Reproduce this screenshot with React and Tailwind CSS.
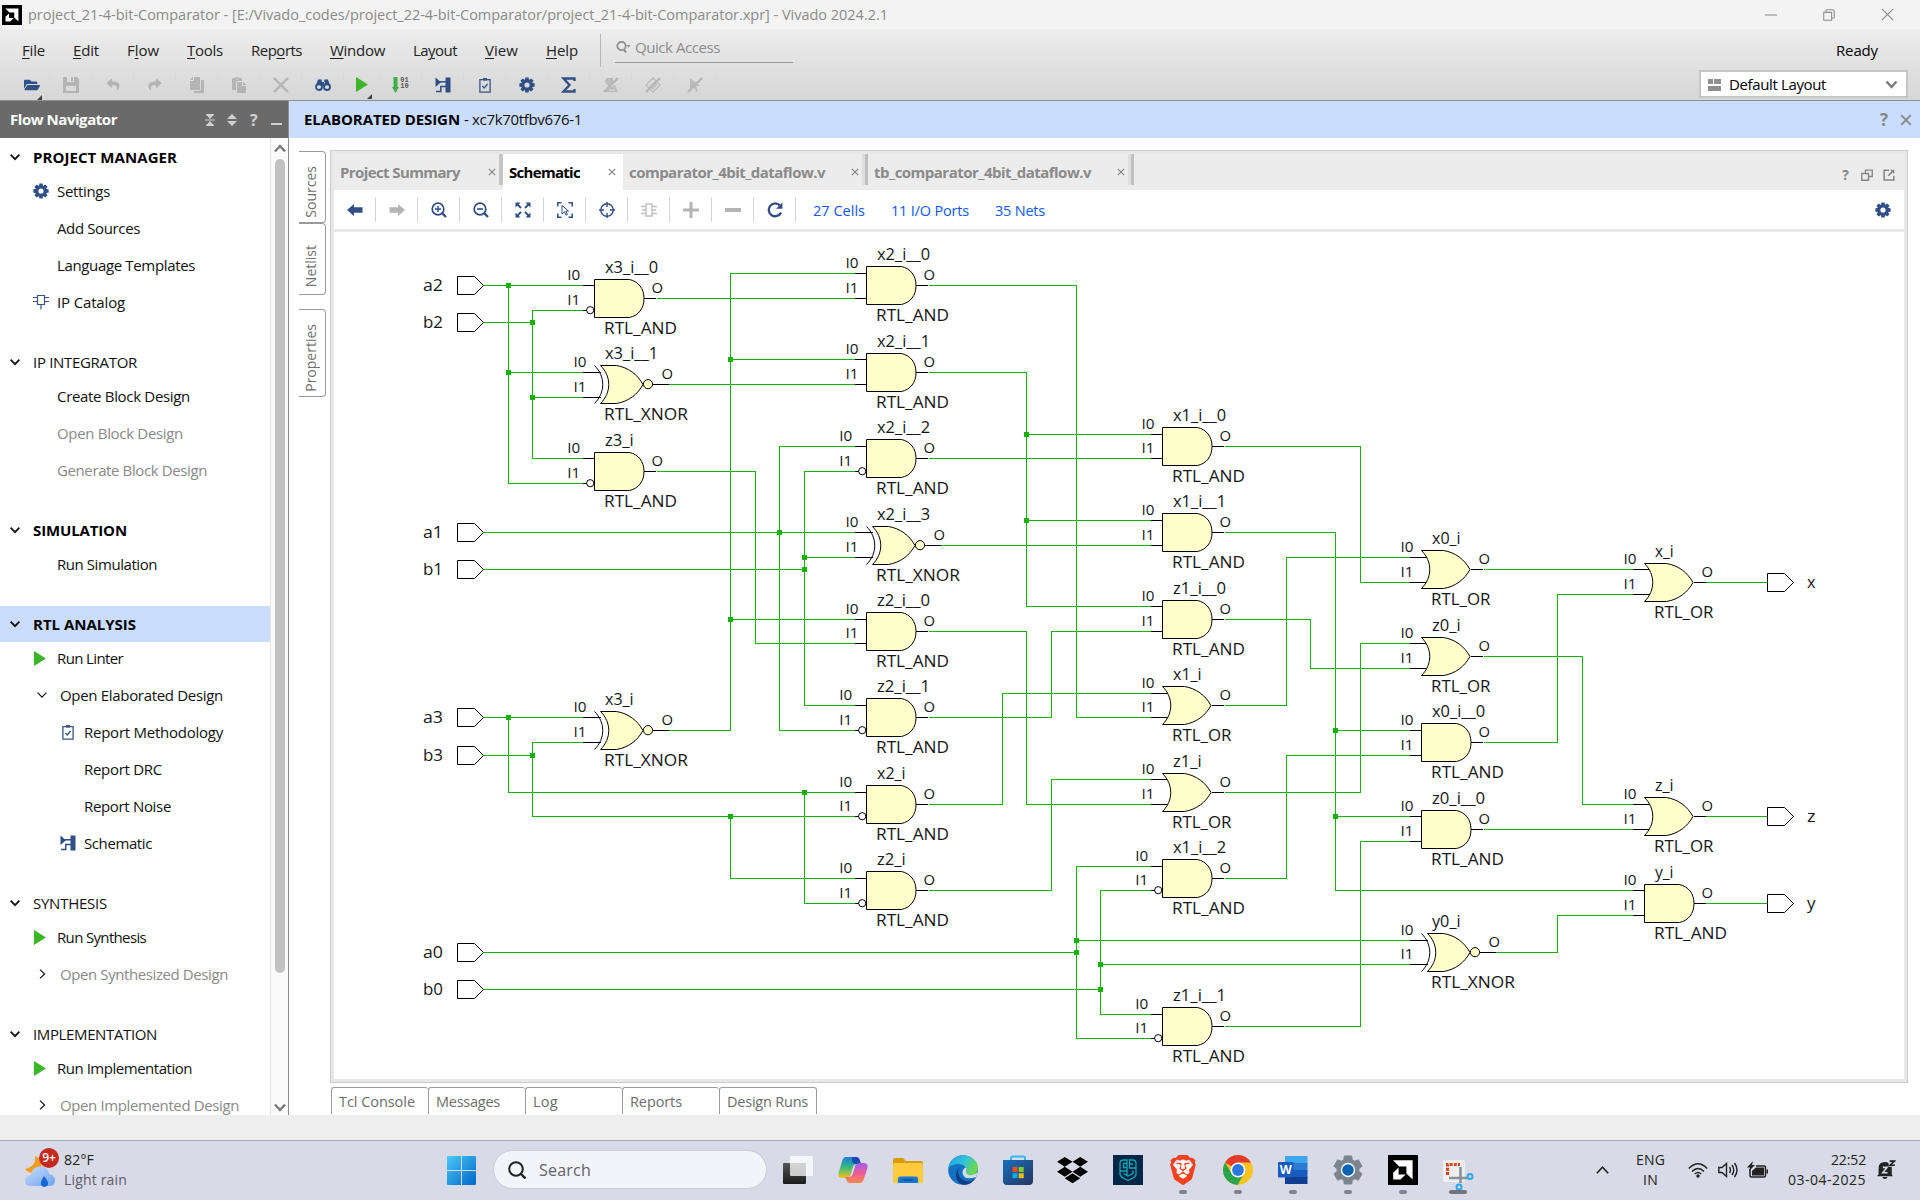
import { useLayoutEffect, useRef, useState } from "react";
import { FaDropbox, FaFolderOpen, FaReply, FaShare, FaCopy, FaPaste } from "react-icons/fa";
import { SiBrave } from "react-icons/si";

/* Text run whose tracking is adjusted so that it spans w pixels. */
function Fit({ w, className = "", children }) {
  const ref = useRef(null);
  const [spacing, setSpacing] = useState(0);
  useLayoutEffect(() => {
    const el = ref.current;
    setSpacing((w - el.getBoundingClientRect().width) / el.textContent.length);
  }, [w]);
  return (
    <span ref={ref} className={"inline-block whitespace-pre " + className} style={{ letterSpacing: spacing }}>
      {children}
    </span>
  );
}

/* ---------- icons ---------- */

function gearPath(c, ro, ri, teeth, half) {
  const pts = [];
  for (let i = 0; i < teeth; i++) {
    const a = (i * 2 * Math.PI) / teeth - Math.PI / 2;
    [[-half * 1.5, ri], [-half, ro], [half, ro], [half * 1.5, ri]].forEach(([d, r]) => {
      pts.push(`${(c + r * Math.cos(a + d)).toFixed(2)} ${(c + r * Math.sin(a + d)).toFixed(2)}`);
    });
  }
  return "M" + pts.join("L") + "Z";
}

const Gear = ({ className = "size-4" }) => (
  <svg viewBox="0 0 16 16" className={"fill-[#2f4f86] " + className}>
    <path fillRule="evenodd" d={gearPath(8, 7.8, 5.8, 8, 0.22) + "M8 5.4a2.6 2.6 0 1 0 0 5.2a2.6 2.6 0 1 0 0 -5.2Z"} />
  </svg>
);

const Play = ({ className = "h-[15px] w-3" }) => (
  <svg viewBox="0 0 12 15" className={"fill-[#3db52a] " + className}>
    <path d="M0 0L12 7.5L0 15Z" />
  </svg>
);

const Clipboard = ({ className = "h-[16px] w-3" }) => (
  <svg viewBox="0 0 12 16" fill="none" stroke="#3b5488" strokeWidth="1.3" className={className}>
    <path d="M.9 2.6H11.1V15.2H.9Z" />
    <path d="M4 1H8V3.6H4Z" fill="#3b5488" stroke="none" />
    <path d="M3.4 9L5.2 11L8.6 7" />
  </svg>
);

const SchematicIcon = ({ className = "size-4" }) => (
  <svg viewBox="0 0 16 16" className={className}>
    <path d="M.5 .5V10L6 5.2Z M10.5 .5H15.5V15.5H10.5Z" fill="#2f4f86" />
    <path d="M4 4.8H11M1 14.6H5.8V9.5H11M12 0" stroke="#2f4f86" strokeWidth="1.5" fill="none" />
  </svg>
);

const ChipIcon = () => (
  <svg viewBox="0 0 16 16" fill="none" stroke="#3b5488" strokeWidth="1.2" className="size-4">
    <path d="M4.5 1.5H11.5V10.5H4.5ZM0 3.5H4.5M0 7.5H4.5M11.5 3.5H16M11.5 7.5H16M8 10.5V15.5" />
  </svg>
);

const Chevron = ({ dir = "down", thin = false }) => (
  <svg viewBox="0 0 10 10" fill="none" stroke="#111" strokeWidth={thin ? 1.2 : 1.8} className="-mt-px size-[10px] shrink-0">
    <path d={dir === "down" ? "M.6 2.6L5 7.2L9.4 2.6" : "M3 .6L7.6 5L3 9.4"} />
  </svg>
);

const BigChevron = ({ up = false, className = "w-3 h-[9px]" }) => (
  <svg viewBox="0 0 12 9" fill="none" stroke="#7b7b7b" strokeWidth="2.4" className={className}>
    <path d={up ? "M1 7.5L6 2L11 7.5" : "M1 1.5L6 7L11 1.5"} />
  </svg>
);

const CloseX = ({ className = "size-[9px]" }) => (
  <svg viewBox="0 0 10 10" fill="none" stroke="#858585" strokeWidth="1.5" className={className}>
    <path d="M1 1L9 9M9 1L1 9" />
  </svg>
);

const Amd = ({ className }) => (
  <svg viewBox="0 0 30 30" className={className}>
    <path d="M0 0H30V30H0Z" fill="#000" />
    <path d="M5 5.2H24.6V24.6L18.4 18.6V11.4H11.2Z" fill="#fff" />
    <path d="M10.6 12.6V19.4H17.6L12.4 24.6H5.2V17.8Z" fill="#fff" />
  </svg>
);

const Svg = ({ children, className = "size-4", box = "0 0 16 16" }) => (
  <svg viewBox={box} fill="none" className={className}>
    {children}
  </svg>
);

/* ---------- title and menus ---------- */

function TitleBar() {
  return (
    <div className="flex h-[29px] items-center bg-[#f3f3f3] pl-[2px] pr-[26px] text-[14.5px] text-[#8b8b8b]">
      <Amd className="mr-[6px] size-5" />
      <Fit w={860}>project_21-4-bit-Comparator - [E:/Vivado_codes/project_22-4-bit-Comparator/project_21-4-bit-Comparator.xpr] - Vivado 2024.2.1</Fit>
      <div className="ml-auto flex items-center gap-[46px]">
        <Svg className="size-3"><path d="M0 8H16" stroke="#8b8b8b" strokeWidth="1.4" /></Svg>
        <Svg className="size-3">
          <path d="M1 4.5H11.5V15H1Z M4 4.5V2.5Q4 1 5.5 1H13Q15 1 15 3V11Q15 12 13.5 12.2H12" stroke="#8b8b8b" strokeWidth="1.4" />
        </Svg>
        <Svg className="size-[13px]"><path d="M1 1L15 15M15 1L1 15" stroke="#8b8b8b" strokeWidth="1.4" /></Svg>
      </div>
    </div>
  );
}

const menus = [
  ["", "F", "ile", 23], ["", "E", "dit", 26], ["F", "l", "ow", 32], ["", "T", "ools", 36], ["Rep", "o", "rts", 51],
  ["", "W", "indow", 55], ["La", "y", "out", 44], ["", "V", "iew", 33], ["", "H", "elp", 32],
];

const Corner = ({ className }) => (
  <span className={"absolute -bottom-[7px] h-0 w-0 border-b-[5px] border-l-[5px] border-b-[#444] border-l-transparent " + className} />
);

const toolIcons = [
  <div className="relative ml-[6px]"><FaFolderOpen className="size-4 text-[#2f4f86]" /><Corner className="left-[13px]" /></div>,
  <Svg><path fillRule="evenodd" d="M0 0H4V5H11V0H14L16 2V16H0ZM3 9V14H13V9Z M8 0H10V4H8Z" fill="#b4b4b4" /></Svg>,
  <FaReply className="h-[13px] w-4 text-[#b4b4b4]" />,
  <FaShare className="h-[13px] w-4 text-[#b4b4b4]" />,
  <FaCopy className="size-4 -scale-x-100 text-[#b4b4b4]" />,
  <FaPaste className="size-4 text-[#b4b4b4]" />,
  <Svg><path d="M1 1L15 15M15 1L1 15" stroke="#b4b4b4" strokeWidth="2.4" /></Svg>,
  <Svg><circle cx="4" cy="10" r="3" stroke="#2f4f86" strokeWidth="1.8" /><circle cx="12" cy="10" r="3" stroke="#2f4f86" strokeWidth="1.8" /><path d="M3 2.500H6.800V8L1 8.500ZM13 2.500H9.200V8L15 8.500ZM6 5H10V9H6Z" fill="#2f4f86" /></Svg>,
  <div className="relative"><Play /><Corner className="left-[11px]" /></div>,
  <div className="flex"><Svg box="0 0 7 16" className="h-4 w-[7px]"><path d="M1.5 0H5.5V10H7L3.5 16L0 10H1.5Z" fill="#3cb04a" /></Svg><div className="ml-px font-mono text-[7px] font-bold leading-[6px] text-[#555]">01<br />10</div></div>,
  <SchematicIcon />,
  <Clipboard />,
  <Gear />,
  <Svg><path d="M13.5 4V1.5H2.5L8.5 8L2.5 14.5H13.5V12" stroke="#2f4f86" strokeWidth="2.3" /></Svg>,
  <Svg><path d="M3 1H10V6L6 10L2 5Z M3 12L8 10L12 8L15 15H0Z" fill="#bcbcbc" /><path d="M6 13H12" stroke="#ddd" /><path d="M15 1L1 15" stroke="#b4b4b4" strokeWidth="2.2" /></Svg>,
  <Svg><path d="M8 1L15 8L8 15L1 8Z M10 5L5 10M12 7L7 12" stroke="#bcbcbc" strokeWidth="1.3" /><path d="M15 1L1 15" stroke="#b4b4b4" strokeWidth="2" /></Svg>,
  <Svg><path d="M3 1L13 9H9L11 14L9 15L7 10L3 13Z" fill="#bcbcbc" /><path d="M15 1L1 15" stroke="#b4b4b4" strokeWidth="2.2" /></Svg>,
];

function MenuArea() {
  return (
    <div className="flex h-[72px] justify-between border-b border-[#8f8f8f] bg-gradient-to-b from-[#ededed] to-[#d6d6d6] pr-[12px]">
      <div>
        <div className="flex h-[39px] items-center pl-[22px] text-[15px] text-[#222]">
          <div className="flex gap-[28px] pt-[4px]">
            {menus.map(([a, u, b, w]) => (
              <Fit key={u + b} w={w}>{a}<span className="underline decoration-1 underline-offset-2">{u}</span>{b}</Fit>
            ))}
          </div>
          <div className="ml-[22px] mt-[3px] h-[33px] w-px bg-[#b5b5b5]" />
          <div className="ml-[14px] mt-px flex h-[28px] w-[178px] items-center border-b border-[#999] pb-[3px] text-[#8b8b8b]">
            <Svg className="mr-[2px] h-4 w-[18px]" box="0 0 18 16"><circle cx="6.5" cy="7" r="4.2" stroke="#8b8b8b" strokeWidth="1.7" /><path d="M8.5 10L11 13.5" stroke="#8b8b8b" strokeWidth="2" /><path d="M11.500 6H15.500L13.500 8.500Z" fill="#8b8b8b" /></Svg>
            <Fit w={85}>Quick Access</Fit>
          </div>
        </div>
        <div className="flex h-[33px] items-center pl-[8px]">
          {toolIcons.map((icon, i) => (
            <div key={i} className={"flex h-[26px] items-center justify-center border-r border-[#dadada] " + (i === 8 ? "w-[36px]" : "w-[42px]")}>{icon}</div>
          ))}
        </div>
      </div>
      <div className="flex flex-col items-end text-[15px]">
        <div className="mr-[30px] flex h-[42px] items-center"><Fit w={42}>Ready</Fit></div>
        <div className="-mt-px flex h-[28px] w-[209px] items-center border-2 border-[#c6c6c6] bg-white pl-[7px] pr-[8px]">
          <Svg className="size-[13px]" box="0 0 13 13"><path d="M0 1H5V6H0ZM6 1H13V6H6ZM0 8H13V13H0Z" fill="#8f8f8f" /></Svg>
          <Fit w={97} className="ml-[8px]">Default Layout</Fit>
          <BigChevron className="ml-auto h-[9px] w-[13px]" />
        </div>
      </div>
    </div>
  );
}

/* ---------- flow navigator ---------- */

const sections = [
  { title: "PROJECT MANAGER", w: 144, bold: true, items: [
    { t: "Settings", w: 53, icon: <Gear /> }, { t: "Add Sources", w: 83 }, { t: "Language Templates", w: 138 }, { t: "IP Catalog", w: 68, icon: <ChipIcon /> }] },
  { title: "IP INTEGRATOR", w: 104, items: [
    { t: "Create Block Design", w: 133 }, { t: "Open Block Design", w: 126, off: true }, { t: "Generate Block Design", w: 150, off: true }] },
  { title: "SIMULATION", w: 94, bold: true, items: [{ t: "Run Simulation", w: 100 }] },
  { title: "RTL ANALYSIS", w: 103, bold: true, active: true, items: [
    { t: "Run Linter", w: 66, icon: <Play /> }, { t: "Open Elaborated Design", w: 163, tree: "down" },
    { t: "Report Methodology", w: 139, deep: true, icon: <Clipboard /> }, { t: "Report DRC", w: 78, deep: true },
    { t: "Report Noise", w: 87, deep: true }, { t: "Schematic", w: 68, deep: true, icon: <SchematicIcon /> }] },
  { title: "SYNTHESIS", w: 74, items: [{ t: "Run Synthesis", w: 89, icon: <Play /> }, { t: "Open Synthesized Design", w: 168, off: true, tree: "right" }] },
  { title: "IMPLEMENTATION", w: 124, items: [{ t: "Run Implementation", w: 135, icon: <Play /> }, { t: "Open Implemented Design", w: 179, off: true, tree: "right" }] },
];

function FlowNavigator() {
  return (
    <aside className="flex w-[289px] shrink-0 flex-col border-r border-[#8e8e8e] bg-white text-[15px] text-[#111]">
      <div className="flex h-[37px] items-center bg-[#6a6a6a] pl-[10px] pr-[6px] text-white">
        <Fit w={107} className="font-bold">Flow Navigator</Fit>
        <div className="ml-auto flex items-center gap-[12px] text-[#d0d0d0]">
          <Svg box="0 0 10 12" className="h-3 w-[10px]"><path d="M0 6H10M1 .6H9M1 11.4H9" stroke="#d0d0d0" strokeWidth="1.1" /><path d="M1.500 1H8.500L5 5ZM1.500 11H8.500L5 7Z" fill="#d0d0d0" /></Svg>
          <Svg box="0 0 10 12" className="h-3 w-[10px]"><path d="M5 0L10 5H0ZM5 12L10 7H0Z" fill="#d0d0d0" /></Svg>
          <span className="ml-px w-[9px] text-[16px] font-bold">?</span>
          <div className="mt-[9px] h-[2px] w-[11px] bg-[#d0d0d0]" />
        </div>
      </div>
      <div className="flex min-h-0 flex-1">
        <nav className="flex-1 overflow-hidden pt-px">
          {sections.map((s) => (
            <section key={s.title} className="mb-[23px]">
              <div className={"flex h-9 items-center gap-[13px] pl-[10px] " + (s.active ? "bg-[#cbddfe]" : "")}>
                <Chevron />
                <Fit w={s.w} className={s.bold ? "font-bold text-black" : ""}>{s.title}</Fit>
              </div>
              <div className="-mt-[2px]">
                {s.items.map((it) => (
                  <div key={it.t} className={"flex h-[37px] items-center " + (it.off ? "text-[#8a8a8a] " : "") + (it.deep ? "pl-[60px]" : "pl-[33px]")}>
                    {it.tree ? (
                      <span className="flex w-[27px] justify-start pl-[4px]"><Chevron dir={it.tree} thin /></span>
                    ) : (
                      <span className="mr-[4px] flex w-5 shrink-0 items-center"><span className={"-mt-px " + (it.t === "Report Methodology" ? "pl-[2px]" : it.icon && it.icon.type === Play ? "pl-[1px]" : "")}>{it.icon}</span></span>
                    )}
                    <Fit w={it.w}>{it.t}</Fit>
                  </div>
                ))}
              </div>
            </section>
          ))}
        </nav>
        <div className="flex w-[18px] flex-col items-center border-l border-[#e4e4e4] bg-[#fafafa] pt-[6px] pb-[3px]">
          <BigChevron up />
          <div className="mt-[6px] h-[814px] w-[10px] rounded-full bg-[#c1c1c1]" />
          <div className="flex-1" />
          <BigChevron />
        </div>
      </div>
    </aside>
  );
}

/* ---------- schematic ---------- */

const rowY = (k) => Math.round(285.4 + 12.345 * k) + 0.5;

const gates = [
  [594, 1, "AND", "x3_i__0", 1], [594, 8, "XNOR", "x3_i__1"], [594, 15, "AND", "z3_i", 1], [594, 36, "XNOR", "x3_i"],
  [866, 0, "AND", "x2_i__0"], [866, 7, "AND", "x2_i__1"], [866, 14, "AND", "x2_i__2", 1], [866, 21, "XNOR", "x2_i__3"],
  [866, 28, "AND", "z2_i__0"], [866, 35, "AND", "z2_i__1", 1], [866, 42, "AND", "x2_i", 1], [866, 49, "AND", "z2_i", 1],
  [1162, 13, "AND", "x1_i__0"], [1162, 20, "AND", "x1_i__1"], [1162, 27, "AND", "z1_i__0"], [1162, 34, "OR", "x1_i"],
  [1162, 41, "OR", "z1_i"], [1162, 48, "AND", "x1_i__2", 1], [1162, 60, "AND", "z1_i__1", 1],
  [1421, 23, "OR", "x0_i"], [1421, 30, "OR", "z0_i"], [1421, 37, "AND", "x0_i__0"], [1421, 44, "AND", "z0_i__0"], [1421, 54, "XNOR", "y0_i"],
  [1644, 24, "OR", "x_i"], [1644, 43, "OR", "z_i"], [1644, 50, "AND", "y_i"],
];

const inPorts = [["a2", 0], ["b2", 3], ["a1", 20], ["b1", 23], ["a3", 35], ["b3", 38], ["a0", 54], ["b0", 57]];
const outPorts = [["x", 24], ["z", 43], ["y", 50]];

/* Each wire: start x, start row, then alternating x and row targets. */
const wires = [
  [483, 0, 583], [508, 0, 508, 16, 583], [508, 7, 583],
  [483, 3, 532, 2, 583], [532, 3, 532, 14, 583], [532, 9, 583],
  [656, 1, 854], [668, 8, 854], [656, 15, 755, 29, 854], [668, 36, 730, -1, 854], [730, 6, 854], [730, 27, 854],
  [483, 20, 854], [779, 20, 779, 13, 854], [779, 20, 779, 36, 854],
  [483, 23, 804, 15, 854], [804, 22, 854], [804, 23, 804, 34, 854],
  [483, 35, 583], [508, 35, 508, 41, 854], [804, 41, 804, 50, 854],
  [483, 38, 532, 37, 583], [532, 38, 532, 43, 854], [730, 43, 730, 48, 854],
  [928, 0, 1076, 35, 1151], [928, 7, 1026, 26, 1151], [1026, 12, 1151], [1026, 19, 1151], [928, 14, 1151], [940, 21, 1151],
  [928, 28, 1026, 42, 1151], [928, 35, 1051, 28, 1151], [928, 42, 1002, 33, 1151], [928, 49, 1051, 40, 1151],
  [483, 54, 1076, 47, 1151], [1076, 54, 1076, 61, 1151], [1076, 53, 1410],
  [483, 57, 1100, 49, 1151], [1100, 57, 1100, 59, 1151], [1100, 55, 1410],
  [1224, 13, 1360, 24, 1410], [1224, 20, 1335, 49, 1632], [1335, 36, 1410], [1335, 43, 1410],
  [1224, 27, 1310, 31, 1410], [1224, 34, 1286, 22, 1410], [1224, 41, 1360, 29, 1410], [1224, 48, 1286, 38, 1410], [1224, 60, 1360, 45, 1410],
  [1483, 23, 1632], [1483, 30, 1582, 42, 1632], [1483, 37, 1557, 25, 1632], [1483, 44, 1632], [1495, 54, 1557, 51, 1632],
  [1705, 24, 1767], [1705, 43, 1767], [1705, 50, 1767],
];

const nodes = [
  [508, 0], [508, 7], [532, 3], [532, 9], [730, 6], [730, 27], [779, 20], [804, 22], [804, 23], [508, 35], [532, 38], [804, 41], [730, 43],
  [1026, 12], [1026, 19], [1076, 53], [1076, 54], [1100, 55], [1100, 57], [1335, 36], [1335, 43],
];

const wirePath = ([x, k, ...rest]) =>
  `M${x + 0.5} ${rowY(k)}` + rest.map((v, i) => (i % 2 ? `V${rowY(v)}` : `H${v + 0.5}`)).join("");

const labelWidths = { AND: 72, OR: 58.5, XNOR: 83 };
const nameWidths = { 3: 18.5, 4: 28.6, 7: 53 };

function Label({ x, y, w, size, children }) {
  return (
    <text x={x} y={y} textLength={w} lengthAdjust="spacingAndGlyphs" fontSize={size} fill="#161616">
      {children}
    </text>
  );
}

function Gate({ x, k, kind, name, bubble }) {
  const y = rowY(k);
  const ya = rowY(k - 1);
  const yb = rowY(k + 1);
  const xl = x + 0.5;
  const pinX = x - (bubble ? 26.7 : 20.5);
  const inner = kind === "AND" ? xl : xl + 6;
  const body = kind === "XNOR" ? xl + 6 : xl;
  return (
    <g>
      <g stroke="#000" fill="none" shapeRendering="crispEdges">
        <path d={`M${x - 11} ${ya}H${inner}M${x - 11} ${yb}H${bubble ? x - 7.5 : inner}`} />
        <path d={kind === "XNOR" ? `M${x + 59} ${y}H${x + 74.5}` : `M${x + 50} ${y}H${x + 62}`} />
      </g>
      <g stroke="#000" fill="#ffffcc">
        {kind === "AND" ? (
          <path d={`M${xl} ${y - 19}H${xl + 35}C${xl + 44} ${y - 17} ${xl + 49.5} ${y - 10} ${xl + 49.5} ${y}S${xl + 44} ${y + 17} ${xl + 35} ${y + 19}H${xl}Z`} />
        ) : (
          <path d={`M${body} ${y - 19}H${xl + 22}C${xl + 34} ${y - 17} ${xl + 43} ${y - 10} ${xl + 48.5} ${y}C${xl + 43} ${y + 10} ${xl + 34} ${y + 17} ${xl + 22} ${y + 19}H${body}C${body + 11} ${y + 8} ${body + 11} ${y - 8} ${body} ${y - 19}Z`} />
        )}
        {kind === "XNOR" && <path fill="none" d={`M${xl} ${y - 19}C${xl + 11} ${y - 8} ${xl + 11} ${y + 8} ${xl} ${y + 19}`} />}
        {kind === "XNOR" && <circle cx={x + 54} cy={y - 0.3} r="4.6" />}
        {bubble && <circle cx={x - 3.8} cy={yb - 0.3} r="3.6" fill="#fff" />}
      </g>
      <Label x={pinX} y={ya - 5.5} w={13} size={15}>I0</Label>
      <Label x={pinX} y={yb - 5.5} w={13} size={15}>I1</Label>
      <Label x={x + (kind === "XNOR" ? 67.5 : 57.5)} y={y - 6} w={11.5} size={14}>O</Label>
      <Label x={x + 11} y={y - 26} w={nameWidths[name.length]} size={17}>{name}</Label>
      <Label x={x + 10} y={y + 35.5} w={labelWidths[kind] + 1} size={17}>{"RTL_" + kind}</Label>
    </g>
  );
}

function Port({ x, k }) {
  const y = rowY(k);
  return <path d={`M${x + 0.5} ${y - 9}H${x + 17.5}L${x + 26.5} ${y}L${x + 17.5} ${y + 9}H${x + 0.5}Z`} fill="#fff" stroke="#000" />;
}

function Schematic() {
  return (
    <svg viewBox="334 232 1570 847" width="1570" height="847" className="block">
      <g stroke="#12b000" fill="none" shapeRendering="crispEdges">
        {wires.map((w, i) => <path key={i} d={wirePath(w)} />)}
      </g>
      {nodes.map(([x, k]) => <rect key={x + "-" + k} x={x - 2} y={rowY(k) - 2.5} width="5" height="5" fill="#12b000" />)}
      {gates.map(([x, k, kind, name, bubble]) => <Gate key={name} x={x} k={k} kind={kind} name={name} bubble={bubble} />)}
      {inPorts.map(([n, k]) => (
        <g key={n}>
          <Port x={457} k={k} />
          <Label x={423} y={rowY(k) + 5.5} w={20} size={17}>{n}</Label>
        </g>
      ))}
      {outPorts.map(([n, k]) => (
        <g key={n}>
          <Port x={1767} k={k} />
          <Label x={1807} y={rowY(k) + 5.5} w={8.5} size={17}>{n}</Label>
        </g>
      ))}
    </svg>
  );
}

/* ---------- main panel ---------- */

const Help = ({ className }) => <span className={"font-bold leading-none text-[#858585] " + className}>?</span>;

function Tab({ children, w, width, active }) {
  return (
    <div className={"flex h-9 items-center pl-[6px] font-bold " + width + " " + (active ? "bg-white pr-[7px] text-black" : "pr-[3px] text-[#8a8a8a]")}>
      <Fit w={w}>{children}</Fit>
      <CloseX className="ml-auto size-[8px]" />
    </div>
  );
}

const TabEdge = () => (
  <div className="flex h-[31px]"><div className="w-[3px] bg-[#dedede]" /><div className="w-[3px] bg-[#c0c0c0]" /></div>
);

const navy = "#2f4f86";
const schematicTools = [
  <Svg><path d="M0 8L7 2V5.2H15.5V10.8H7V14Z" fill={navy} /></Svg>,
  <Svg><path d="M16 8L9 2V5.2H.5V10.8H9V14Z" fill="#b5b5b5" /></Svg>,
  <Svg><circle cx="7" cy="7" r="5.8" stroke={navy} strokeWidth="1.7" /><path d="M4 7H10M7 4V10" stroke={navy} strokeWidth="1.4" /><path d="M11 11L15 15" stroke={navy} strokeWidth="2.4" /></Svg>,
  <Svg><circle cx="7" cy="7" r="5.8" stroke={navy} strokeWidth="1.7" /><path d="M4 7H10" stroke={navy} strokeWidth="1.6" /><path d="M11 11L15 15" stroke={navy} strokeWidth="2.4" /></Svg>,
  <Svg><path d="M.5 .5H5.500L.5 5.500ZM15.500 .5H10.500L15.500 5.500ZM.5 15.500H5.500L.5 10.500ZM15.500 15.500H10.500L15.500 10.500Z" fill={navy} /><path d="M2 2L6 6M14 2L10 6M14 14L10 10M2 14L6 10" stroke={navy} strokeWidth="1.8" /></Svg>,
  <Svg><path d="M.8 4.5V.8H4.5M11.5 .8H15.2V4.5M15.2 11.5V15.2H11.5M4.5 15.2H.8V11.5" stroke={navy} strokeWidth="1.5" /><path d="M5 3.5L11.5 9H8.8L10.4 12.6L9 13.2L7.5 9.8L5 12Z" stroke={navy} strokeWidth="1" /></Svg>,
  <Svg><circle cx="8" cy="8" r="6.2" stroke={navy} strokeWidth="1.4" /><path d="M8 0V5M8 11V16M0 8H5M11 8H16" stroke={navy} strokeWidth="1.4" /></Svg>,
  <Svg><path d="M5 2H11V14H5ZM0 4.5H5M1 8H5M0 11.5H5M11 4.5H16M11 8H15M11 11.5H16" stroke="#c0c0c0" strokeWidth="1.4" /></Svg>,
  <Svg><path d="M0 8H16M8 0V16" stroke="#b5b5b5" strokeWidth="3" /></Svg>,
  <Svg><path d="M0 8H16" stroke="#b5b5b5" strokeWidth="4" /></Svg>,
  <Svg><path d="M13 3.6A6.4 6.4 0 1 0 14 10.5" stroke={navy} strokeWidth="2.3" /><path d="M15.4 .4V6.8H9Z" fill={navy} /></Svg>,
];

const bottomTabs = [["Tcl Console", 76], ["Messages", 64], ["Log", 25], ["Reports", 52], ["Design Runs", 81]];

function SideTab({ size, shift, children }) {
  return (
    <div className={"flex w-[27px] items-center justify-center rounded-r-[4px] border border-l-0 border-[#9a9a9a] pr-[4px] text-[14px] text-[#6f6f6f] " + size + " " + shift}>
      <div className="rotate-180 [writing-mode:vertical-rl]">
        <span className="whitespace-pre">{children}</span>
      </div>
    </div>
  );
}

function MainArea() {
  return (
    <main className="flex min-w-0 flex-1 flex-col bg-white">
      <div className="flex h-[37px] shrink-0 items-center bg-[#cbddfe] pl-[15px] pr-[8px] text-[15px] text-[#111]">
        <Fit w={156} className="font-bold text-black">ELABORATED DESIGN</Fit>
        <Fit w={118} className="ml-[4px]">- xc7k70tfbv676-1</Fit>
        <div className="ml-auto flex items-center gap-[12px]">
          <Help className="text-[17px]" />
          <CloseX className="size-[12px]" />
        </div>
      </div>
      <div className="flex pt-[12px]">
        <div className="w-[41px] pl-[10px] pt-px">
          <SideTab size="h-[72px]" shift="pt-[10px]">Sources</SideTab>
          <SideTab size="h-[72px]" shift="pt-[15px]">Netlist</SideTab>
          <SideTab size="mt-[14px] h-[88px]" shift="pt-[9px]">Properties</SideTab>
        </div>
        <div className="w-[1578px] border border-[#cbcbcb]">
          <div className="border-[3px] border-[#e8e8e8]">
            <div className="flex h-9 bg-[#ececec] text-[15px]">
              <Tab w={120} width="w-[165px]">Project Summary</Tab>
              <div className="h-[31px] w-[4px] bg-[#c6c6c6]" />
              <Tab w={71} width="w-[120px]" active>Schematic</Tab>
              <Tab w={196} width="w-[239px]">comparator_4bit_dataflow.v</Tab>
              <TabEdge />
              <Tab w={217} width="w-[260px]">tb_comparator_4bit_dataflow.v</Tab>
              <TabEdge />
              <div className="ml-auto flex items-center gap-[10px] pr-[9px] pt-[5px]">
                <Help className="mr-[2px] text-[14px]" />
                <Svg className="size-3"><path d="M1 6H10V15H1ZM6 6V1.5H15V10H10" stroke="#858585" strokeWidth="1.8" /></Svg>
                <Svg className="size-3"><path d="M8 1.5H1.5V14.5H14.5V9M7 9L13.5 2.5" stroke="#858585" strokeWidth="2" /><path d="M9.5 1H15V6.5Z" fill="#858585" /></Svg>
              </div>
            </div>
            <div className="flex h-[42px] items-center border-b-[3px] border-[#e8e8e8] text-[14.5px] text-[#1258f0]">
              {schematicTools.map((icon, i) => (
                <div key={i} className="flex h-[25px] w-[42px] items-center justify-center border-r border-[#d5d5d5]">{icon}</div>
              ))}
              <div className="ml-[17px] flex gap-[26px] pt-[2px]">
                <Fit w={52}>27 Cells</Fit>
                <Fit w={78}>11 I/O Ports</Fit>
                <Fit w={50}>35 Nets</Fit>
              </div>
              <Gear className="ml-auto mr-[13px] size-4" />
            </div>
            <Schematic />
          </div>
        </div>
      </div>
      <div className="mt-[4px] flex pl-[42px] text-[14.5px] text-[#6c6c6c]">
        {bottomTabs.map(([t, w], i) => (
          <div key={t} className={"flex h-[27px] items-center rounded-t-[3px] border-l border-t border-[#9a9a9a] pl-[7px] pt-[2px] " + (i === 4 ? "w-[98px] border-r" : "w-[97px]")}>
            <Fit w={w}>{t}</Fit>
          </div>
        ))}
      </div>
    </main>
  );
}

/* ---------- taskbar ---------- */

const Big = ({ children }) => <svg viewBox="0 0 30 30" className="size-[30px] overflow-visible">{children}</svg>;

const apps = [
  { id: "task", icon: <Big><defs><linearGradient id="tv" x1="0" y1="0" x2="0" y2="1"><stop offset="0" stopColor="#555" /><stop offset="1" stopColor="#1c1c1c" /></linearGradient></defs><rect x="0" y="8" width="23" height="21" rx="1" fill="url(#tv)" /><rect x="7" y="1" width="23" height="20" rx="1" fill="#fff" opacity=".75" /></Big> },
  { id: "copilot", icon: <Big><defs><linearGradient id="cpa" x1="0" y1="0" x2="0" y2="1"><stop offset="0" stopColor="#1a7fe0" /><stop offset=".5" stopColor="#3cba7c" /><stop offset="1" stopColor="#f0c419" /></linearGradient><linearGradient id="cpb" x1="0" y1="0" x2="0" y2="1"><stop offset="0" stopColor="#a55fe8" /><stop offset=".5" stopColor="#ea5b9c" /><stop offset="1" stopColor="#ff8a4c" /></linearGradient></defs><path d="M8 2H18Q21 2 22 6L23 9H19Q16 9 15 12L12.500 20Q11.500 23 8 23H4Q-1 23 .8 17L4.500 5Q5.500 2 8 2Z" fill="url(#cpa)" /><path d="M14 2H18Q21 2 22 6L23 9H18Q15 9 14 6Z" fill="#1b49b8" /><path d="M22 28H12Q9 28 8 24L7 22H11Q14 22 15 18L17.500 10Q18.500 8 22 8H26Q31 8 29.200 14L25.500 25Q24.500 28 22 28Z" fill="url(#cpb)" /></Big> },
  { id: "files", icon: <Big><path d="M0 5Q0 3 2 3H10L13 6H28Q30 6 30 8V14H0Z" fill="#d99a0b" /><rect x="0" y="8" width="30" height="20" rx="1.500" fill="#ffcb3d" /><path d="M5 28V24Q5 21.500 7.500 21.500H22.500Q25 21.500 25 24V28Z" fill="#1378d0" /><path d="M10 25H20" stroke="#0a4d94" strokeWidth="1.300" /></Big> },
  { id: "edge", icon: <Big><defs><linearGradient id="eg" x1="0" y1="0" x2="1" y2=".4"><stop offset="0" stopColor="#1b9de2" /><stop offset=".6" stopColor="#36c5d8" /><stop offset="1" stopColor="#6ad84c" /></linearGradient></defs><circle cx="15" cy="15" r="14.800" fill="#1371c4" /><path d="M.4 13C2 5 8 .2 15 .2C24 .2 30 6.500 30 12.500C30 17 27 20 22.500 20C18 20 16.500 18 18.500 15.500C19.500 12 15 9 10 9C6 9 2 11 .4 13Z" fill="url(#eg)" /><path d="M11 12C8 19 13 26.500 21 26.500Q24.500 26.500 28 22.500C25 28 20 30 15 29.800C8 28 5.500 19 11 12Z" fill="#0f3f83" /><path d="M17.500 12.500Q19.500 14 18 16Q17 19.600 22.500 20.200Q27 20 29.600 17L28.200 22Q16 26 14.500 18Q14.500 14 17.500 12.500Z" fill="#d9dbe9" /></Big> },
  { id: "store", icon: <Big><defs><linearGradient id="ms" x1="0" y1="0" x2="1" y2="1"><stop offset="0" stopColor="#1570bd" /><stop offset="1" stopColor="#28345f" /></linearGradient></defs><path d="M8 7V3Q8 1.500 9.500 1.500H20.500Q22 1.500 22 3V7" fill="none" stroke="#37b8ee" strokeWidth="2" /><path d="M0 5H30V26Q30 30 26 30H4Q0 30 0 26Z" fill="url(#ms)" /><path d="M9.500 12H14.500V17H9.500Z" fill="#f1511b" /><path d="M15.700 12H20.700V17H15.700Z" fill="#80cc28" /><path d="M9.500 18.200H14.500V23.200H9.500Z" fill="#00adef" /><path d="M15.700 18.200H20.700V23.200H15.700Z" fill="#fbbc09" /></Big> },
  { id: "dropbox", icon: <FaDropbox className="h-[30px] w-[31px] text-black" /> },
  { id: "pg", icon: <Big><path d="M0 0H30V30H0Z" fill="#032748" /><path d="M14 20V5H10.500Q7 5 7 8.500V16H14M14 8.500H10.500V12.500H14M16.500 4V13H23V8Q23 5 19.500 5H16.500M17 9H20M7 16V19.500Q8 22.500 15 25.500Q22 22.500 23 20V13M10.500 18.500L15 21L20 18.500V15.500" fill="none" stroke="#12a5ad" strokeWidth="1.300" /></Big> },
  { id: "brave", dot: 1, icon: <SiBrave className="size-[30px] rounded-[12px] bg-[radial-gradient(white_45%,transparent_46%)] text-[#f8401c]" /> },
  { id: "chrome", dot: 1, icon: <Big><circle cx="15" cy="15" r="15" fill="#fcc31e" /><path d="M15 15L2 7.500A15 15 0 0 1 28 7.500H15Z" fill="#e33b2e" /><path d="M2 7.500L9 19L15 21.500L21 18.500L14.500 30A15 15 0 0 1 2 7.500Z" fill="#2ba24c" /><circle cx="15" cy="15" r="7.500" fill="#fff" /><circle cx="15" cy="15" r="5.900" fill="#2b78e4" /></Big> },
  { id: "word", dot: 1, icon: <Big><path d="M7 1H29.500V9H7Z" fill="#41a5ee" /><path d="M7 8H29.500V16H7Z" fill="#2b7cd3" /><path d="M7 15H29.500V23H7Z" fill="#185abd" /><path d="M7 22H29.500V29H7Z" fill="#103f91" /><rect x="0" y="7" width="15.500" height="15.500" rx="1" fill="#185abd" /><text x="7.700" y="19" textAnchor="middle" fontSize="12.500" fontWeight="700" fill="#fff">W</text></Big> },
  { id: "settings", dot: 1, icon: <Big><path d={gearPath(15, 14.5, 11, 6, 0.26)} fill="#7b858e" stroke="#7b858e" strokeLinejoin="round" /><circle cx="15" cy="15" r="7.200" fill="#fff" /><circle cx="15" cy="15" r="5.800" fill="#0d63b3" /></Big> },
  { id: "vivado", dot: 1, icon: <Amd className="size-[30px]" /> },
  { id: "snip", dot: 2, icon: <Big><rect x="0" y="5" width="22" height="22" rx="2" fill="#efeff2" /><path d="M4.500 20V9.500H17" fill="none" stroke="#d9441c" strokeWidth="3" strokeDasharray="3 1.200" /><path d="M17.500 12V28M6 23H24" stroke="#8b9096" strokeWidth="2.600" /><circle cx="27" cy="21.500" r="2.500" fill="none" stroke="#2aa6e8" strokeWidth="2" /><circle cx="16" cy="32" r="2.500" fill="none" stroke="#2aa6e8" strokeWidth="2" /></Big> },
];

function Taskbar() {
  return (
    <footer className="flex h-[60px] border-t border-[#a9abb9] bg-[#d8dae8]">
      <div className="flex w-[447px] items-center pb-[2px] pl-[24px]">
        <div className="relative mr-[9px] h-[44px] w-[31px]">
          <svg viewBox="0 0 31 44" className="h-[44px] w-[31px]">
            <defs><linearGradient id="cl" x1="0" y1="0" x2="1" y2="1"><stop offset="0" stopColor="#c9dcfb" /><stop offset="1" stopColor="#6ea4f0" /></linearGradient></defs>
            <path d="M11 8Q13 18 1 21Q6 27 14 24Q20 18 15 10Z" fill="#f29b1d" />
            <path d="M7 38Q1 38 1 32.500Q1 27.500 7 27Q8 18.500 16 18.500Q24 18.500 25 26Q31 27 31 32.500Q31 38 25 38Z" fill="url(#cl)" />
            <path d="M20 28Q25 34 24 37Q20 41 17 37Q16 34 20 28Z" fill="#1467d2" />
          </svg>
          <span className="absolute left-[15px] top-0 flex size-5 items-center justify-center rounded-full bg-[#c42b1c] text-[12px] font-semibold text-white">9+</span>
        </div>
        <div className="text-[14px] leading-[20px]">
          <div className="text-[#222]"><Fit w={30}>82°F</Fit></div>
          <div className="text-[#5c5c66]"><Fit w={63}>Light rain</Fit></div>
        </div>
      </div>
      <div className="flex items-center">
        <svg viewBox="0 0 29 29" className="mr-[17px] size-[29px]">
          <defs><linearGradient id="wn" x1="0" y1="0" x2="1" y2="1"><stop offset="0" stopColor="#4cc8f8" /><stop offset="1" stopColor="#0067c8" /></linearGradient></defs>
          <path d="M0 1Q0 0 1 0H14V14H0ZM15 0H28Q29 0 29 1V14H15ZM0 15H14V29H1Q0 29 0 28ZM15 15H29V28Q29 29 28 29H15Z" fill="url(#wn)" />
        </svg>
        <div className="mb-[2px] flex h-[39px] w-[274px] items-center rounded-full border border-[#c9cbd8] bg-[#f3f4f9] pl-[14px] text-[16px] text-[#60606a]">
          <Svg className="mr-[13px] size-[18px]" box="0 0 18 18"><circle cx="8" cy="8" r="6.800" stroke="#222" strokeWidth="2" /><path d="M13 13L17.500 17.500" stroke="#222" strokeWidth="2.400" /></Svg>
          <Fit w={52}>Search</Fit>
        </div>
        <div className="ml-[3px] flex items-center">
          {apps.map((a) => (
            <div key={a.id} className="relative flex h-[59px] w-[55px] items-center justify-center pb-px">
              {a.icon}
              {a.dot === 1 && <span className="absolute bottom-[6px] h-1 w-2 rounded-full bg-[#80828c]" />}
              {a.dot === 2 && <span className="absolute bottom-[6px] h-1 w-[18px] rounded-full bg-[#70727c]" />}
            </div>
          ))}
        </div>
      </div>
      <div className="ml-auto flex items-center pb-[2px] pr-[24px] text-[14px] leading-[20px] text-[#222]">
        <Svg className="mr-[27px] h-[8px] w-[13px]" box="0 0 13 8"><path d="M.8 7.200L6.500 1.200L12.200 7.200" stroke="#222" strokeWidth="1.600" /></Svg>
        <div className="mr-[23px] text-center"><Fit w={29}>ENG</Fit><br /><Fit w={15}>IN</Fit></div>
        <Svg className="mr-[10px] h-[16px] w-5" box="0 0 20 16"><path d="M.8 6.500Q10 -3 19.200 6.500M4 9.500Q10 3.500 16 9.500M6.800 12Q10 9 13.200 12" stroke="#222" strokeWidth="1.500" /><circle cx="10" cy="14" r="1.700" fill="#222" /></Svg>
        <Svg className="mr-[9px] h-[16px] w-5" box="0 0 20 16"><path d="M.8 5.500H4L8.500 1.500V14.500L4 10.500H.8Z M11.500 5Q13.500 8 11.500 11M14 3Q17.500 8 14 13M16.500 1Q21.500 8 16.500 15" stroke="#222" strokeWidth="1.400" /></Svg>
        <Svg className="mr-[20px] h-[17px] w-[21px]" box="0 0 21 17"><path d="M3 8V14.500Q3 16 4.500 16H17Q18.500 16 18.500 14.500V6.500Q18.500 5 17 5H9" stroke="#222" strokeWidth="1.500" /><path d="M6 9L9 6.500H17V14.500H5V10ZM19.500 8.500H21V12.500H19.500ZM6 0L0 6.500H3L2 10L8 4H5Z" fill="#222" /></Svg>
        <div className="mr-[11px] text-right"><Fit w={35}>22:52</Fit><br /><Fit w={78}>03-04-2025</Fit></div>
        <Svg className="size-[19px]" box="0 0 18 18"><path d="M1.500 13.500V8Q1.500 2 7.500 2Q10 2 11 3V6.500H14V13.500L15 15.500H0Z M5 16H10Q9.500 18 7.500 18Q5.500 18 5 16Z" fill="#222" /><path d="M5.500 7H9.500L5.500 12H10" stroke="#d8dae8" strokeWidth="1.500" /><path d="M12 1H16.500L12.500 5H17" stroke="#222" strokeWidth="1.600" /></Svg>
      </div>
    </footer>
  );
}

export default function App() {
  return (
    <div className="flex h-[1200px] w-[1920px] flex-col overflow-hidden bg-[#eeeeee] font-['Open_Sans','Noto_Sans',sans-serif]">
      <TitleBar />
      <MenuArea />
      <div className="flex h-[1014px] overflow-hidden">
        <FlowNavigator />
        <MainArea />
      </div>
      <div className="h-[25px] bg-[#eeeeee]" />
      <Taskbar />
    </div>
  );
}
